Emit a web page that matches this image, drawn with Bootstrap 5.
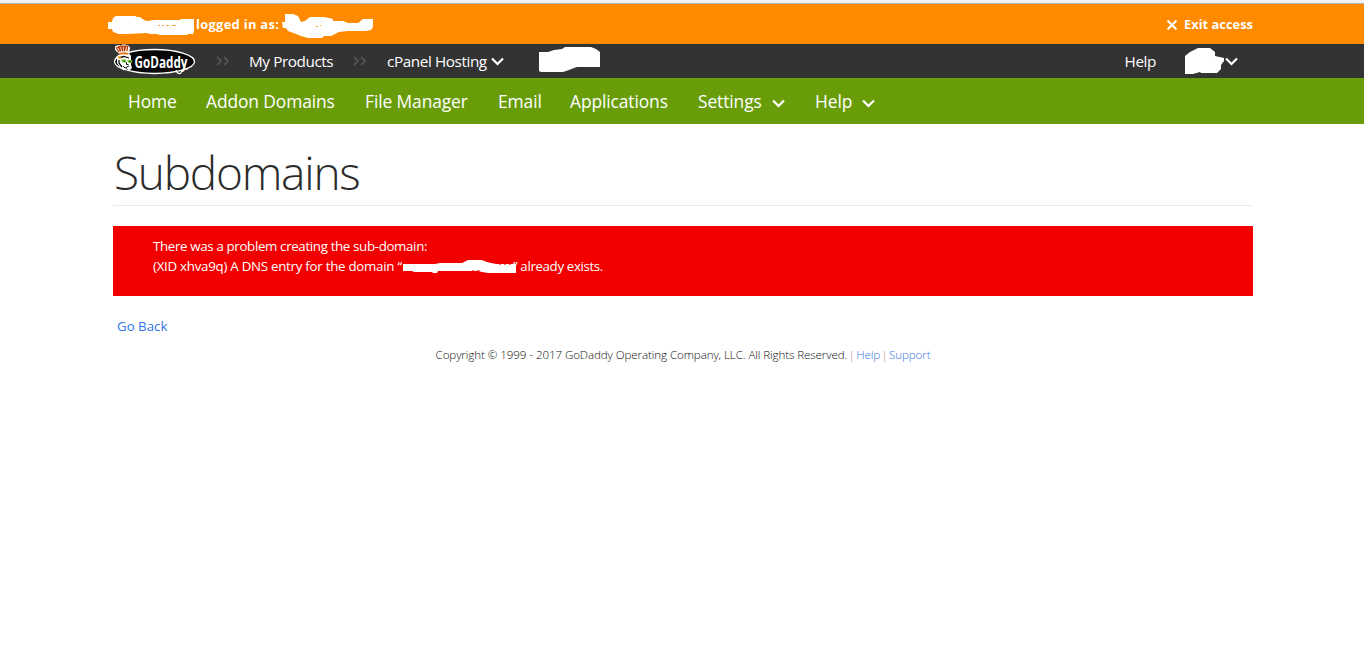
<!DOCTYPE html>
<html lang="en">
<head>
<meta charset="utf-8">
<meta name="viewport" content="width=device-width, initial-scale=1">
<title>Subdomains</title>
<link href="https://cdn.jsdelivr.net/npm/bootstrap@5.3.0/dist/css/bootstrap.min.css" rel="stylesheet">
<style>
body{font-family:"Open Sans","Noto Sans",sans-serif;font-size:13.3px;line-height:20px;color:#333;background:#fff;overflow:hidden}
a{text-decoration:none;color:#3374e6}
.page-width{width:1140px;margin-left:113px}
.edge{background:#f0f0f0;border-bottom:1px solid #b5b5b5;height:4px}
.access-bar{height:40px;background:#ff8a00;color:#fff;font-weight:700;font-size:12.9px}
.crumb-bar{height:34px;background:#333;font-size:15.3px;letter-spacing:-.42px}
.crumb-bar a,.main-nav a{color:#fff;white-space:nowrap}
.main-nav{height:46px;background:#699c09;font-size:17.4px;letter-spacing:-.1px}
.main-nav a{margin-right:30px;flex:none}
.main-nav .page-width{padding:0 0 0 15px}
svg{display:block;flex:none;overflow:visible}
.chev{fill:none;stroke:#fff;stroke-width:2.2}
.title{font-size:46px;font-weight:300;line-height:60px;height:64px;margin:18px 0 20px;border-bottom:1px solid #ececec;letter-spacing:-1.25px;padding-left:1px;color:#2b2b2b}
.notice{height:70px;background:#f20000;color:#fff;padding:10px 40px;border-radius:0;letter-spacing:-.34px}
.foot{font-size:11.6px;font-weight:300;line-height:18px;color:#111;letter-spacing:-.11px;word-spacing:.1px;margin-top:10px}
.bar{color:#b77}
.foot .bar,.foot a{margin-left:-1.6px}
</style>
</head>
<body>
<div class="edge"></div>
<div class="access-bar">
  <div class="page-width d-flex align-items-center h-100">
    <svg width="87" height="40" viewBox="108 4 87 40" style="margin-left:-5px"><path fill="#fff" d="M108 22h4l1-4 3-2h19l2 1h3l4 3 3 1 8-1h25l1-1h13v12l-1 3h-5l-1 1h-27l-3-1h-7l-3-1-20 1h-9l-2-1-3-1-1-3h-4z"/><path stroke="#ffa33d" d="M158 25.500h2m2 0h2m2 0h3m3 0h4"/></svg>
    <span class="text-nowrap" style="width:87px;padding-left:1px;letter-spacing:.3px">logged in as:</span>
    <svg width="92" height="40" viewBox="282 4 92 40"><path fill="#fff" d="M282 22h3v-8h8l5 2 3 6 4-1 5-4 14 0 9 2v2h10l5 2h10l5-4h10v8l-2 3-5 1h-18l-9 1-8 4h-7l-2 2h-14l-7-2-5-2-8-3-2-3h-3z"/><path stroke="#ff9b2b" d="M316 26.500h2m2-1h1"/></svg>
    <svg class="ms-auto" width="12" height="12" viewBox="0 0 12 12" style="margin-top:2px"><path d="M1.500 1.500 10.500 10.500M10.500 1.500 1.500 10.500" stroke="#fff" stroke-width="2.200"/></svg>
    <span style="margin-left:6px">Exit access</span>
  </div>
</div>
<div class="crumb-bar">
  <div class="page-width d-flex align-items-center h-100">
    <svg width="84" height="34" viewBox="113 44 84 34">
      <ellipse cx="154.500" cy="61.500" rx="40" ry="12" fill="#050707" stroke="#fff" stroke-width="1.300"/>
      <path d="M120 54 115.500 50v-3.500l3-1 2 .5 2-1h3l3 1 1 2-1 5 2 3v9l1 3-2 2-3-2-3 2-4-4-2-3v-4l-1-2z" fill="#fff" stroke="#fff"/>
      <path d="m119 52-2.500-4 2-1 2 4.500-1-5 2-.3 1 5 .3-5h2l-.5 5 1.500-5h2l-1 5" fill="none" stroke="#bb3d08" stroke-width="1.300"/>
      <path d="M119 53q5-1.500 9.500 0v1.800q-5-1.300-9.500 0z" fill="#e87a1b"/>
      <path d="M120 57.500l4-1 5 1.500M119 60v3l3 4" fill="none" stroke="#111" stroke-width="1.300"/>
      <path d="M122 60h3.500v2H123zM128 60.500h3.500v2H129z" fill="#333" stroke="#76c82a" stroke-width="1.200"/>
      <path d="m123 66 2 2 4-2M126.500 62v2.500h2" fill="none" stroke="#111"/>
      <circle cx="119.500" cy="57.500" r="1.500" fill="#e4a51e"/>
      <path d="M176 70q1 4 4.500 3.500l2.500-4.500h5" fill="none" stroke="#fff" stroke-width="1.200"/>
      <text x="134.500" y="67.500" textLength="53" lengthAdjust="spacingAndGlyphs" font-family="Open Sans, sans-serif" letter-spacing="0" font-weight="700" font-size="16.500" fill="#fff">GoDaddy</text>
    </svg>
    <svg width="14" height="10" viewBox="0 0 14 10" style="margin-left:19px"><path d="m1 1 4 4-4 4m7-8 4 4-4 4" fill="none" stroke="#5c5c5c" stroke-width="1.300"/></svg>
    <a href="#" style="margin-left:19px;width:84px">My Products</a>
    <svg width="14" height="10" viewBox="0 0 14 10" style="margin-left:20px"><path d="m1 1 4 4-4 4m7-8 4 4-4 4" fill="none" stroke="#5c5c5c" stroke-width="1.300"/></svg>
    <a href="#" style="margin-left:20px;width:99px">cPanel Hosting</a>
    <svg width="13" height="9" viewBox="0 0 13 9" style="margin-left:5px"><path class="chev" d="m1 1.500 5.500 5.500L12 1.500"/></svg>
    <svg width="62" height="34" viewBox="539 44 62 34" style="margin-left:35px"><path fill="#fff" d="M539 52h9l6-2 8-1 3-2h26l5 2 4 3v15h-23l-3 1-5 2-6 2h-22l-2-1z"/></svg>
    <a href="#" class="ms-auto">Help</a>
    <svg width="40" height="34" viewBox="1185 44 40 34" style="margin-left:29px"><path fill="#fff" d="M1185 56l5-4 8-4h12l5 4v4l9 2v3l-3 4v4l-4 4h-16l-1-1-7 2h-8z"/></svg>
    <svg width="13" height="9" viewBox="0 0 13 9" style="margin-right:15px"><path class="chev" d="m1 1.500 5.500 5.500L12 1.500"/></svg>
  </div>
</div>
<nav class="main-nav">
  <div class="page-width d-flex align-items-center h-100">
    <a href="#" style="width:48px">Home</a><a href="#" style="width:129px">Addon Domains</a><a href="#" style="width:103px">File Manager</a><a href="#" style="width:42px">Email</a><a href="#" style="width:98px">Applications</a>
    <a href="#" class="d-flex align-items-center justify-content-between" style="width:87px">Settings<svg width="13" height="9" viewBox="0 0 13 9" class="mt-1"><path class="chev" d="m1 1.500 5.500 5.500L12 1.500"/></svg></a>
    <a href="#" class="d-flex align-items-center justify-content-between" style="width:60px">Help<svg width="13" height="9" viewBox="0 0 13 9" class="mt-1"><path class="chev" d="m1 1.500 5.500 5.500L12 1.500"/></svg></a>
  </div>
</nav>
<main class="page-width">
  <h1 class="title">Subdomains</h1>
  <div class="notice alert border-0 mb-0">
    <div>There was a problem creating the sub-domain:</div>
    <div class="d-flex"><span style="width:250px;letter-spacing:-.26px" class="text-nowrap">(XID xhva9q) A DNS entry for the domain “</span><svg width="114" height="20" viewBox="403 256 114 20" style="margin-right:-4px"><path fill="#fff" d="M403 264h32l5-1h22l6-3h14l5 2 9 2h20v9h-28l-6-1-4-1h-40l-1 2h-4l-1-1h-18l-2-1h-9z"/><path stroke="#f66" d="M472 270.500h2m3 0h3m19-6h2m3 0h2m3 0h2" /></svg><span style="letter-spacing:-.36px">” already exists.</span></div>
  </div>
  <div style="padding:20px 0 0 4px"><a href="#">Go Back</a></div>
  <footer class="foot text-center"><span>Copyright © 1999 - 2017 GoDaddy Operating Company, LLC. All Rights Reserved.</span> <span class="bar">|</span> <a href="#">Help</a> <span class="bar">|</span> <a href="#">Support</a></footer>
</main>
<script src="https://cdn.jsdelivr.net/npm/bootstrap@5.3.0/dist/js/bootstrap.bundle.min.js"></script>
</body>
</html>
